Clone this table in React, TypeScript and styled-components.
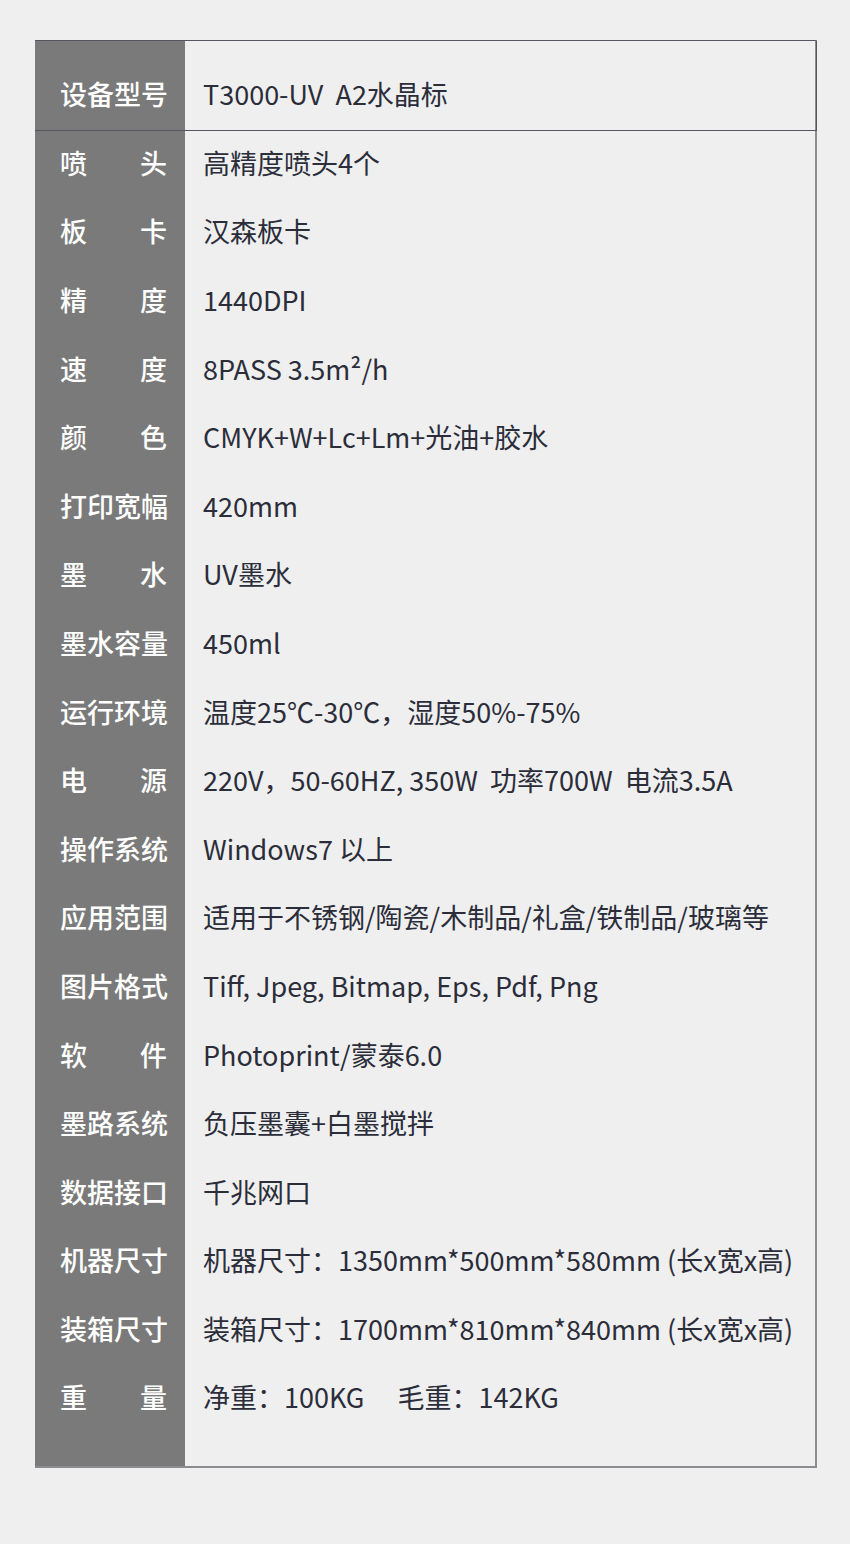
import React from "react";
import styled, { createGlobalStyle } from "styled-components";

const GlobalStyle = createGlobalStyle`
  html, body { margin: 0; padding: 0; background: #efefef; }
  body { font-family: "Noto Sans CJK SC", "Noto Sans", sans-serif; }
`;

const Page = styled.div`
  width: 850px;
  height: 1544px;
  box-sizing: border-box;
  padding: 40px 33px 0 35px;
  background: #efefef;
`;

const Table = styled.div`
  display: grid;
  grid-template-columns: 150px 1fr;
  border-top: 1px solid #55555f;
  border-right: 2px solid #8c8c90;
  border-bottom: 2px solid #8c8c90;
  box-sizing: border-box;
`;

const Label = styled.div<{ $head?: boolean; $spread?: boolean }>`
  background: #7a7a7a;
  color: #ffffff;
  font-size: 27px;
  font-weight: 500;
  height: ${(p) => (p.$head ? "69px" : "68.6px")};
  box-sizing: content-box;
  padding: ${(p) => (p.$head ? "20px 18px 0 25px" : "0 18px 0 25px")};
  display: flex;
  align-items: center;
  justify-content: ${(p) => (p.$spread ? "space-between" : "flex-start")};
  border-bottom: ${(p) => (p.$head ? "1px solid #55555f" : "none")};
  white-space: nowrap;
  & > span { position: relative; top: ${(p) => (p.$head ? "-2px" : "-3px")}; }
`;

const Value = styled.div<{ $head?: boolean }>`
  color: #2b2d3a;
  font-size: 27px;
  height: ${(p) => (p.$head ? "69px" : "68.6px")};
  padding: ${(p) => (p.$head ? "20px 0 0 18px" : "0 0 0 18px")};
  display: flex;
  align-items: center;
  white-space: pre;
  border-bottom: ${(p) => (p.$head ? "1px solid #55555f" : "none")};
  ${(p) => (p.$head ? "border-right: 1px solid #55555f; margin-right: -2px;" : "")}
  & > span { position: relative; top: ${(p) => (p.$head ? "-2px" : "-3px")}; }
`;

const FootLabel = styled.div`
  background: #7a7a7a;
  height: 32px;
`;

const FootValue = styled.div`
  height: 32px;
`;

const rows: [string, string][] = [
  ["喷头", "高精度喷头4个"],
  ["板卡", "汉森板卡"],
  ["精度", "1440DPI"],
  ["速度", "8PASS 3.5m²/h"],
  ["颜色", "CMYK+W+Lc+Lm+光油+胶水"],
  ["打印宽幅", "420mm"],
  ["墨水", "UV墨水"],
  ["墨水容量", "450ml"],
  ["运行环境", "温度25℃-30℃，湿度50%-75%"],
  ["电源", "220V，50-60HZ, 350W  功率700W  电流3.5A"],
  ["操作系统", "Windows7 以上"],
  ["应用范围", "适用于不锈钢/陶瓷/木制品/礼盒/铁制品/玻璃等"],
  ["图片格式", "Tiff, Jpeg, Bitmap, Eps, Pdf, Png"],
  ["软件", "Photoprint/蒙泰6.0"],
  ["墨路系统", "负压墨囊+白墨搅拌"],
  ["数据接口", "千兆网口"],
  ["机器尺寸", "机器尺寸：1350mm*500mm*580mm (长x宽x高)"],
  ["装箱尺寸", "装箱尺寸：1700mm*810mm*840mm (长x宽x高)"],
  ["重量", "净重：100KG\u3000 毛重：142KG"],
];

export default function App() {
  return (
    <>
      <GlobalStyle />
      <Page>
        <Table>
          <Label $head>
            <span>设备型号</span>
          </Label>
          <Value $head>
            <span>{"T3000-UV  A2水晶标"}</span>
          </Value>
          {rows.map(([k, v]) => {
            const spread = k.length === 2;
            return (
              <React.Fragment key={k}>
                <Label $spread={spread}>
                  {spread ? (
                    <>
                      <span>{k[0]}</span>
                      <span>{k[1]}</span>
                    </>
                  ) : (
                    <span>{k}</span>
                  )}
                </Label>
                <Value>
                  <span>{v}</span>
                </Value>
              </React.Fragment>
            );
          })}
          <FootLabel />
          <FootValue />
        </Table>
      </Page>
    </>
  );
}
